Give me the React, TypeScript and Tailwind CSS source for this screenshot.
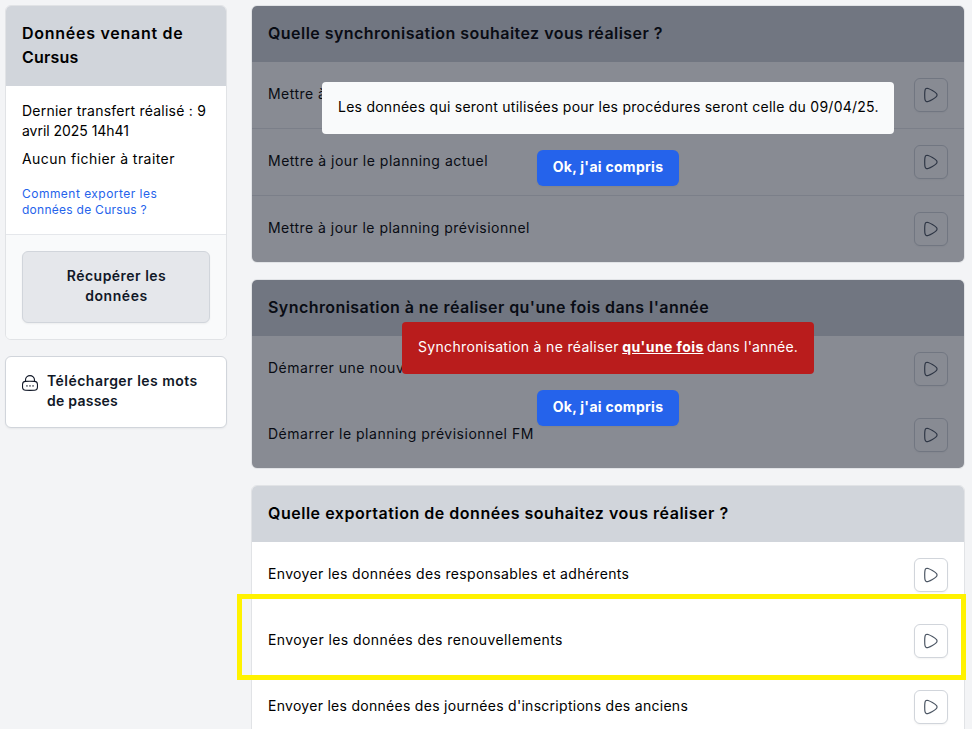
import React from "react";

function PlayIcon() {
  return (
    <svg viewBox="0 0 16 16" className="size-4" fill="none" stroke="currentColor" strokeWidth="1.2" strokeLinecap="round" strokeLinejoin="round">
      <path d="M1.700 8c0-2 0-3.400.3-4.700C2.300 1.600 3.700 1 5.200 1.550c1.300.5 2.600 1.100 4.200 2 1.700.95 2.800 1.700 3.700 2.600 1.250 1.150 1.250 2.550 0 3.700-.9.900-2 1.650-3.700 2.600-1.600.9-2.900 1.500-4.200 2-1.500.550-2.900-.05-3.200-1.750C1.700 11.400 1.700 10 1.700 8Z" />
    </svg>
  );
}

function LockIcon() {
  return (
    <svg viewBox="0 0 16 16" className="size-4 shrink-0" fill="none" stroke="currentColor" strokeWidth="1.1" strokeLinecap="round" strokeLinejoin="round">
      <path d="M3.500 6.300V5a4.500 4.400 0 0 1 9 0v1.300" />
      <path d="M.6 9C.75 7.500 1.900 6.500 3.500 6.400c3-.15 6-.15 9 0 1.600.1 2.750 1.100 2.900 2.600.1 1.300.1 2.400 0 3.700-.15 1.500-1.300 2.500-2.900 2.600-3 .15-6 .15-9 0C1.900 15.200.75 14.200.6 12.700c-.1-1.300-.1-2.400 0-3.700Z" />
      <path d="M4.700 10.900h.5M7.750 10.900h.5M10.800 10.900h.5" />
    </svg>
  );
}

function Row({ label, tracking, divider = false }: { label: string; tracking: string; divider?: boolean }) {
  return (
    <div className={`flex justify-between p-4 ${divider ? "border-b border-gray-200" : ""}`}>
      <span className={`pt-1.5 text-sm leading-5 whitespace-nowrap ${tracking}`}>{label}</span>
      <button className="flex size-[34px] items-center justify-center rounded-md border border-[#d1d5db] bg-white text-[#4b5563] shadow-xs">
        <PlayIcon />
      </button>
    </div>
  );
}

function Card({ title, tracking, children, overlay }: { title: string; tracking: string; children: React.ReactNode; overlay?: React.ReactNode }) {
  return (
    <section className="relative overflow-hidden rounded-md border border-[#e1e3e6] bg-white">
      <h2 className={`bg-[#d1d5db] px-4 pt-[15px] pb-[17px] text-base font-semibold whitespace-nowrap ${tracking}`}>{title}</h2>
      {children}
      {overlay && (
        <div className="absolute inset-0 flex flex-col items-center justify-center gap-4 bg-[#111827]/50">
          {overlay}
          <button className="h-9 w-[142px] rounded-md bg-[#2563eb] pb-0.5 text-sm font-bold tracking-[0.28px] whitespace-nowrap text-white shadow-xs">
            Ok, j'ai compris
          </button>
        </div>
      )}
    </section>
  );
}

export default function App() {
  return (
    <div className="relative h-[729px] w-[972px] overflow-hidden bg-[#f3f4f6] font-['Inter',sans-serif] text-black">
      <div className="flex items-start gap-6 py-[5px] pl-[5px]">
        <aside className="flex w-[222px] shrink-0 flex-col gap-4">
          <section className="overflow-hidden rounded-md border border-[#e1e3e6] bg-white">
            <h2 className="bg-[#d1d5db] px-4 pt-[15px] pb-[17px] text-base font-semibold whitespace-nowrap">
              <span className="block tracking-[0.73px]">Données venant de</span>
              <span className="block tracking-[0.2px]">Cursus</span>
            </h2>
            <div className="px-4 pt-[15px] pb-4 whitespace-nowrap">
              <p className="text-sm leading-5">
                <span className="block tracking-[0.24px]">Dernier transfert réalisé : 9</span>
                <span className="block tracking-[-0.04px]">avril 2025 14h41</span>
              </p>
              <p className="mt-2 text-sm leading-5 tracking-[0.44px]">Aucun fichier à traiter</p>
              <a className="mt-[17px] block text-xs leading-4 text-[#2563eb]">
                <span className="block tracking-[0.47px]">Comment exporter les</span>
                <span className="block tracking-[0.27px]">données de Cursus ?</span>
              </a>
            </div>
            <div className="border-t border-gray-200 bg-[#f9fafb] p-4">
              <button className="block h-[72px] w-full rounded-md border border-[#d1d5db] bg-[#e5e7eb] pb-0.5 pl-px text-sm leading-5 font-semibold text-[#111827] shadow-xs">
                <span className="block tracking-[0.48px]">Récupérer les</span>
                <span className="block tracking-[0.55px]">données</span>
              </button>
            </div>
          </section>
          <button className="flex h-[72px] items-start gap-2 rounded-md border border-[#d1d5db] bg-white px-4 pt-3.5 text-left text-sm leading-5 font-semibold whitespace-nowrap text-[#111827] shadow-xs">
            <span className="pt-1">
              <LockIcon />
            </span>
            <span className="pl-px">
              <span className="block tracking-[0.47px]">Télécharger les mots</span>
              <span className="block tracking-[0.25px]">de passes</span>
            </span>
          </button>
        </aside>

        <main className="flex w-[714px] shrink-0 flex-col gap-4">
          <Card
            title="Quelle synchronisation souhaitez vous réaliser ?"
            tracking="tracking-[0.46px]"
            overlay={
              <p className="h-[52px] w-[572px] rounded bg-[#f9fafb] px-4 pt-[15px] text-sm leading-5 tracking-[0.25px] whitespace-nowrap">
                Les données qui seront utilisées pour les procédures seront celle du 09/04/25.
              </p>
            }
          >
            <Row label="Mettre à" tracking="tracking-[0.45px]" divider />
            <Row label="Mettre à jour le planning actuel" tracking="tracking-[0.5px]" divider />
            <Row label="Mettre à jour le planning prévisionnel" tracking="tracking-[0.475px]" />
          </Card>

          <Card
            title="Synchronisation à ne réaliser qu'une fois dans l'année"
            tracking="tracking-[0.435px]"
            overlay={
              <p className="flex h-[52px] w-[412px] justify-between rounded bg-[#b91c1c] px-4 pt-[15px] text-sm leading-5 whitespace-nowrap text-white">
                <span className="tracking-[0.33px]">Synchronisation à ne réaliser</span>
                <strong className="font-bold tracking-[0.42px] underline">qu'une fois</strong>
                <span className="tracking-[0.2px]">dans l'année.</span>
              </p>
            }
          >
            <Row label="Démarrer une nouv" tracking="tracking-[0.5px]" />
            <Row label="Démarrer le planning prévisionnel FM" tracking="tracking-[0.52px]" />
          </Card>

          <Card title="Quelle exportation de données souhaitez vous réaliser ?" tracking="tracking-[0.52px]">
            <Row label="Envoyer les données des responsables et adhérents" tracking="tracking-[0.34px]" />
            <Row label="Envoyer les données des renouvellements" tracking="tracking-[0.415px]" />
            <Row label="Envoyer les données des journées d'inscriptions des anciens" tracking="tracking-[0.283px]" />
          </Card>
        </main>
      </div>
      <div className="pointer-events-none absolute top-[594px] left-[237px] h-[86px] w-[729px] border-5 border-[#fff200]" />
    </div>
  );
}
